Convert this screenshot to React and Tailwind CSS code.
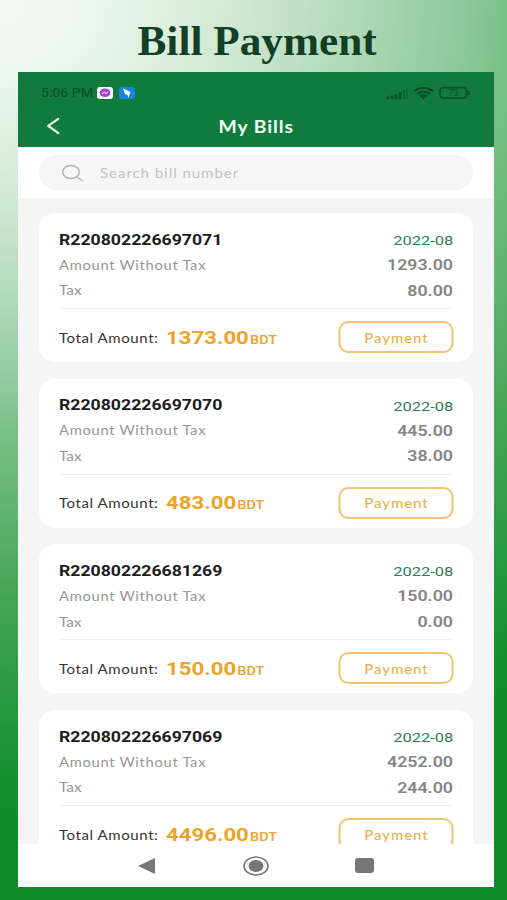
const bills = [
  { id: "R220802226697071", net: "1293.00", tax: "80.00", total: "1373.00" },
  { id: "R220802226697070", net: "445.00", tax: "38.00", total: "483.00" },
  { id: "R220802226681269", net: "150.00", tax: "0.00", total: "150.00" },
  { id: "R220802226697069", net: "4252.00", tax: "244.00", total: "4496.00" },
];

const round = "font-['Lato','Liberation_Sans',sans-serif]";
const num = "font-['Roboto','Liberation_Sans',sans-serif]";

function Bill({ bill }) {
  return (
    <article className="h-[149px] shrink-0 rounded-[16px] bg-white px-[20px] pt-[14px]">
      <div className="flex h-[26px] items-center justify-between">
        <span className={`origin-left scale-x-[1.262] text-[14px] font-bold text-[#1c1c1c] ${num}`}>{bill.id}</span>
        <span className={`origin-right scale-x-[1.22] text-[13.5px] text-[#2f8057] ${num}`}>2022-08</span>
      </div>
      <div className="flex h-[25px] items-center justify-between">
        <span className={`origin-left scale-x-[1.135] text-[13px] tracking-[0.6px] text-[#969696] ${round}`}>Amount Without Tax</span>
        <span className={`origin-right scale-x-[1.27] text-[14px] font-semibold text-[#858585] ${num}`}>{bill.net}</span>
      </div>
      <div className="flex h-[26px] items-center justify-between">
        <span className={`origin-left scale-x-[1.18] text-[13px] text-[#969696] ${round}`}>Tax</span>
        <span className={`origin-right scale-x-[1.27] text-[14px] font-semibold text-[#858585] ${num}`}>{bill.tax}</span>
      </div>
      <div className="mt-[4px] h-px bg-[#eeeeee]" />
      <div className="mt-[12px] flex h-[32px] items-center justify-between">
        <div className="flex items-center pt-[2px]">
          <span className="flex w-[107px]"><span className={`origin-left scale-x-[1.155] whitespace-nowrap text-[13px] leading-none tracking-[0.5px] text-[#333] ${round}`}>Total Amount:</span></span>
          <span className="flex origin-left scale-x-[1.2] items-baseline leading-none text-[#eda328]">
            <span className={`text-[18.5px] font-bold leading-[14px] ${num}`}>{bill.total}</span>
            <span className={`ml-px text-[12px] font-medium leading-[12px] ${num}`}>BDT</span>
          </span>
        </div>
        <div className="flex h-[32px] w-[115px] translate-x-[0.5px] items-center justify-center rounded-[10px] border-2 border-[#f0c470] pt-[2px]">
          <span className={`scale-x-[1.15] text-[13px] font-medium leading-none tracking-[0.8px] text-[#e8b04a] ${round}`}>Payment</span>
        </div>
      </div>
    </article>
  );
}

export default function App() {
  return (
    <main className="h-[900px] w-[507px] overflow-hidden bg-[radial-gradient(ellipse_963px_817px_at_0_0,#f4faf2_0%,#ebf6ec_10%,#cfe8d2_25%,#b0d9b8_37%,#8ac796_49%,#78c087_53%,#45a557_73%,#158f30_95%,#118c2c_100%)] px-[18px]">
      <h1 className="flex h-[72px] items-center justify-center pl-[7px] pt-[11px] font-['Liberation_Serif',serif] text-[42px] font-bold text-[#113f27]">
        <span className="scale-x-[1.03]">Bill Payment</span>
      </h1>
      <section className="flex h-[815px] w-[476px] flex-col overflow-hidden bg-[#f5f5f5]">
        <header className="h-[75px] shrink-0 bg-[#117b3e]">
          <div className="flex h-[41px] items-center pl-[23px] pr-[24px]">
            <span className="flex w-[56px] pt-[2px]"><span className={`origin-left scale-x-[1.13] whitespace-nowrap text-[12.5px] text-[#0a4d25] ${num}`}>5:06 PM</span></span>
            <svg className="h-[12px] w-[16px]" viewBox="0 0 16 12">
              <rect width="16" height="12" rx="3" fill="#fff" />
              <ellipse cx="8" cy="5.8" rx="5.4" ry="4.3" fill="#a641df" />
              <path d="M5 6.900 7.200 5l1.800 1.500 2-1.500" fill="none" stroke="#fff" strokeWidth="1" />
            </svg>
            <svg className="ml-[6px] h-[12px] w-[16px]" viewBox="0 0 16 12">
              <rect width="16" height="12" rx="3" fill="#1685dd" />
              <path d="M4 1.5 11.5 5 9.5 11 8.5 8 6 7z" fill="#fff" />
            </svg>
            <svg className="ml-auto h-[14px] w-[85px]" viewBox="0 0 85 14" fill="none" stroke="#0b4d27">
              <path d="M3 13v-2.500M7 13V9.500M11 13V8M15 13V6" strokeWidth="2.600" />
              <path d="M19 13V3.500" strokeWidth="1.800" strokeOpacity=".6" />
              <path d="M22 13V1.500" strokeWidth="1.200" strokeOpacity=".6" />
              <path d="M29 5q9.500-6.500 19 0M32 8q6.500-4.500 13 0M35 10.500q3.500-2.400 7 0" strokeWidth="2.200" />
              <circle cx="38.500" cy="12" r="1.200" fill="#0b4d27" stroke="none" />
              <rect x="55" y="1.700" width="26.500" height="10.300" rx="3" strokeWidth="1.400" />
              <path d="M83.500 5v4" strokeWidth="2" />
              <text x="68.500" y="10" textAnchor="middle" fontSize="8.500" fill="#0b4d27" stroke="none" className={num}>73</text>
            </svg>
          </div>
          <div className="grid h-[26px] grid-cols-[1fr_auto_1fr] items-center px-[28px]">
            <svg className="h-[18px] w-[14px]" viewBox="0 0 14 18" fill="none" stroke="#e8fff0" strokeWidth="2.2" strokeLinecap="round" strokeLinejoin="round"><path d="M12.200 1.800 2.200 8.800l10 7.200" /></svg>
            <span className={`scale-x-[1.17] pt-[2px] text-[16.500px] font-bold tracking-[0.8px] text-[#f2fff6] ${round}`}>My Bills</span>
          </div>
        </header>
        <div className="h-[51px] shrink-0 bg-white px-[21px] pt-[8px]">
          <div className="flex h-[35px] items-center rounded-full bg-[#f6f6f6] pl-[22px]">
            <svg className="h-[18px] w-[23px]" viewBox="0 0 23 18" fill="none" stroke="#b5b5b5" strokeWidth="1.5"><ellipse cx="10" cy="8" rx="8.300" ry="6.600" /><path d="m16 13 5 3.500" strokeLinecap="round" /></svg>
            <span className={`ml-[16px] origin-left scale-x-[1.16] pt-[3px] text-[13px] tracking-[0.8px] text-[#c2c2c2] ${round}`}>Search bill number</span>
          </div>
        </div>
        <div className="flex min-h-0 flex-1 flex-col gap-[16.7px] overflow-hidden px-[21px] pt-[15px]">
          {bills.map((bill) => <Bill key={bill.id} bill={bill} />)}
        </div>
        <nav className="flex h-[43px] shrink-0 items-center bg-white pl-[119px]">
          <svg className="h-[18px] w-[19px]" viewBox="0 0 19 18"><path d="M1 9 18 1v16z" fill="#777" /></svg>
          <svg className="ml-[87px] h-[20px] w-[26px]" viewBox="0 0 26 20"><ellipse cx="13" cy="10" rx="12" ry="9" fill="none" stroke="#777" strokeWidth="1.600" /><ellipse cx="13" cy="10" rx="7.500" ry="6" fill="#777" /></svg>
          <span className="ml-[86px] h-[15px] w-[19px] rounded-[3px] bg-[#777]" />
        </nav>
      </section>
    </main>
  );
}
